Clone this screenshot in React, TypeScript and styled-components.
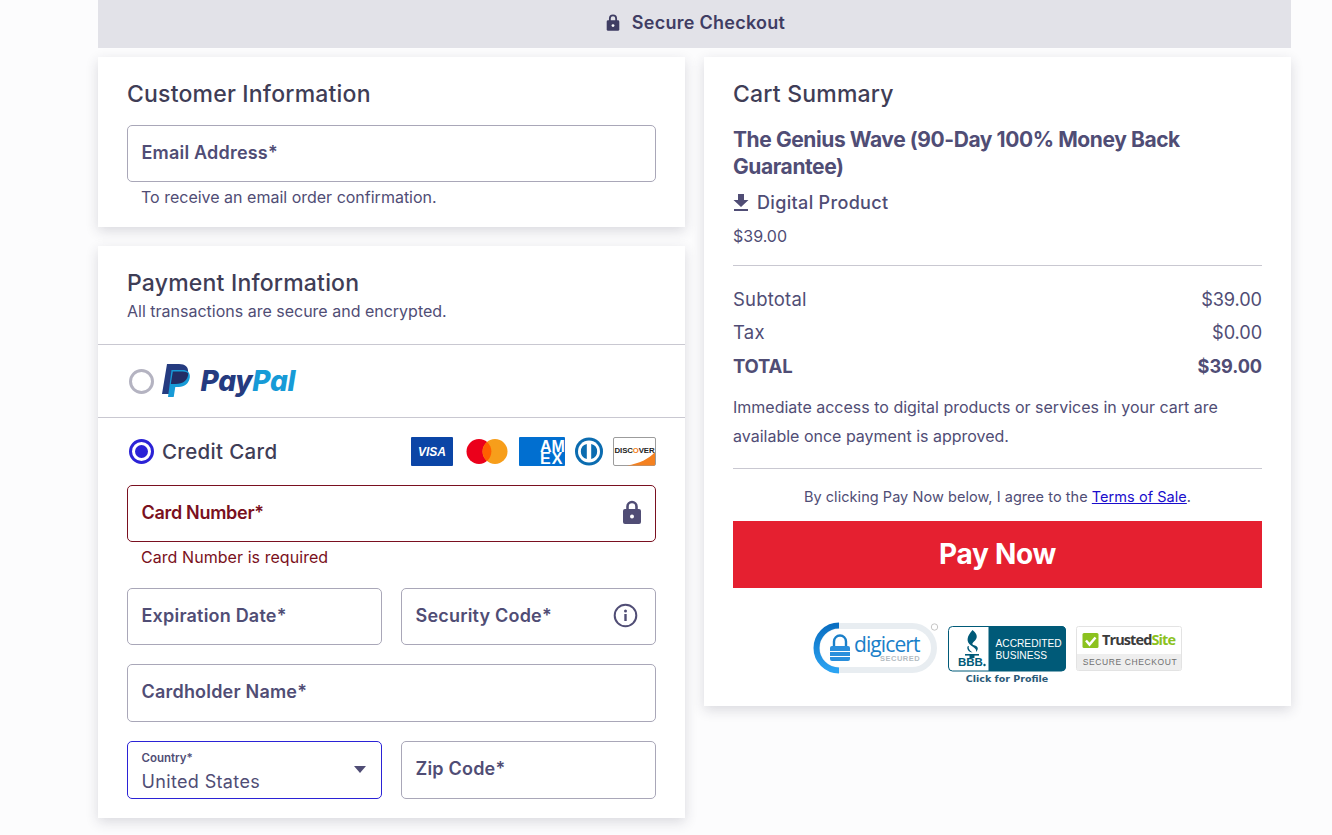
import React from "react";
import styled, { createGlobalStyle } from "styled-components";

const Global = createGlobalStyle`
  html, body { margin: 0; padding: 0; background: #fcfcfd; }
  body { font-family: "Inter", "Noto Sans", sans-serif; color: #3f3d56; overflow: hidden; height: 835px; }
  * { box-sizing: border-box; }
`;

const Page = styled.div`
  width: 1193px;
  margin-left: 98px;
`;
const TopBar = styled.div`
  height: 48px;
  background: #e2e2e8;
  display: flex;
  align-items: center;
  justify-content: center;
  gap: 12px;
  font-size: 18px;
  font-weight: 600;
  color: #3f3d63;
  letter-spacing: 0.26px;
  padding: 0 0 3px 2px;
`;
const Columns = styled.div`
  display: grid;
  grid-template-columns: 587px 587px;
  column-gap: 19px;
  align-items: start;
  margin-top: 9px;
`;
const Stack = styled.div`
  display: flex;
  flex-direction: column;
  gap: 19px;
`;
const Card = styled.section<{ $h: number }>`
  background: #fff;
  height: ${(p) => p.$h}px;
  box-shadow: 0 4px 12px rgba(40, 40, 60, 0.16);
`;
const Pad = styled.div`
  padding: 0 29px;
`;
const Heading = styled.h2`
  margin: 0;
  padding-top: 22px;
  font-size: 23px;
  line-height: 30px;
  font-weight: 500;
  color: #3f3d56;
  letter-spacing: 0.2px;
`;
const Field = styled.div<{ $error?: boolean; $focus?: boolean; $mt?: number; $h?: number }>`
  position: relative;
  flex: 1;
  height: ${(p) => p.$h ?? 57}px;
  margin-top: ${(p) => p.$mt ?? 0}px;
  display: flex;
  align-items: center;
  justify-content: space-between;
  padding: 0 14px 3px 13.5px;
  border: 1px solid ${(p) => (p.$error ? "#7a1020" : p.$focus ? "#2b22d6" : "#a9a7b8")};
  border-radius: 5px;
  background: #fff;
  font-size: 18px;
  font-weight: 600;
  letter-spacing: ${(p) => (p.$error ? "-0.3px" : "0.2px")};
  color: ${(p) => (p.$error ? "#7a1020" : "#504d75")};
`;
const Hint = styled.div<{ $error?: boolean }>`
  padding-left: 14px;
  margin-top: 5px;
  font-size: 16px;
  line-height: 20px;
  color: ${(p) => (p.$error ? "#7a1020" : "#504d75")};
  letter-spacing: ${(p) => (p.$error ? "0.06px" : "0")};
`;
const SubText = styled.div`
  font-size: 16px;
  line-height: 20px;
  margin-top: 3px;
  color: #504d75;
`;
const Spacer = styled.div`
  height: 23px;
`;
const Divider = styled.hr`
  margin: 0;
  border: 0;
  height: 1px;
  background: #c9c8d1;
`;
const PayPalRow = styled.div`
  height: 72px;
  display: flex;
  align-items: center;
  gap: 7px;
  padding-left: 31px;
`;
const Radio = styled.span<{ $on?: boolean }>`
  width: 25px;
  height: 25px;
  border-radius: 50%;
  flex: none;
  border: ${(p) => (p.$on ? "3px solid #2b22d6" : "3px solid #b4b3c1")};
  display: flex;
  align-items: center;
  justify-content: center;
  &::after {
    content: "";
    display: ${(p) => (p.$on ? "block" : "none")};
    width: 13px;
    height: 13px;
    border-radius: 50%;
    background: #2b22d6;
  }
`;
const CardRow = styled.div`
  height: 67px;
  display: flex;
  align-items: center;
  padding: 0 29px 0 31px;
  gap: 8px;
`;
const CardLabel = styled.span`
  font-size: 20.5px;
  font-weight: 500;
  letter-spacing: 0.33px;
  color: #3f3d56;
  flex: 1;
`;
const Brands = styled.div`
  display: flex;
  align-items: center;
`;
const Row = styled.div<{ $mt: number }>`
  display: flex;
  gap: 19px;
  margin-top: ${(p) => p.$mt}px;
`;
const CountryText = styled.div`
  display: flex;
  flex-direction: column;
  margin-top: 8px;
`;
const CountryLabel = styled.span`
  font-size: 11.5px;
  line-height: 14px;
  font-weight: 600;
  letter-spacing: 0;
`;
const CountryValue = styled.span`
  font-size: 18px;
  line-height: 24px;
  font-weight: 400;
  margin-top: 5px;
  letter-spacing: 0.35px;
`;
const Caret = styled.span`
  width: 0;
  height: 0;
  border-left: 6.5px solid transparent;
  border-right: 6.5px solid transparent;
  border-top: 7px solid #504d75;
  margin: 2px 1px 0 0;
`;
const ProductTitle = styled.h3`
  margin: 17px 0 0;
  font-size: 21px;
  line-height: 27px;
  font-weight: 700;
  letter-spacing: -0.42px;
  color: #504d75;
`;
const DigitalRow = styled.div`
  margin-top: 9px;
  display: flex;
  align-items: center;
  gap: 8px;
  height: 27px;
  font-size: 18px;
  font-weight: 500;
  letter-spacing: 0.33px;
  color: #504d75;
`;
const Price = styled.div`
  margin-top: 8px;
  font-size: 16px;
  line-height: 24px;
  color: #504d75;
  margin-bottom: 17px;
`;
const TotalRow = styled.div<{ $bold?: boolean }>`
  display: flex;
  justify-content: space-between;
  height: 33.5px;
  align-items: center;
  font-size: 18.5px;
  font-weight: ${(p) => (p.$bold ? 700 : 400)};
  letter-spacing: ${(p) => (p.$bold ? "-0.2px" : "0.2px")};
  color: #504d75;
`;
const Amount = styled.span`
  letter-spacing: -0.1px;
  font-size: 18.2px;
`;
const Totals = styled.div`
  padding-top: 16px;
`;
const Notice = styled.p`
  margin: 10px 0 17px;
  font-size: 16px;
  line-height: 29px;
  color: #504d75;
`;
const Terms = styled.p`
  margin: 18px 0 14px;
  font-size: 14.5px;
  line-height: 20px;
  text-align: center;
  letter-spacing: 0.05px;
  color: #504d75;
  a { color: #1a0dcc; text-decoration: underline; }
`;
const PayButton = styled.button`
  display: block;
  width: 100%;
  height: 67px;
  border: 0;
  background: #e52030;
  color: #fff;
  font-family: inherit;
  font-size: 28px;
  font-weight: 700;
  letter-spacing: -0.3px;
`;
const Badges = styled.div`
  display: flex;
  justify-content: center;
  align-items: flex-start;
  margin-top: 33px;
`;
const IconEnd = styled.span<{ $mr: number }>`
  display: flex;
  margin-right: ${(p) => p.$mr}px;
`;

const LockIcon = ({ size = 18, color = "#3f3d63" }: { size?: number; color?: string }) => (
  <svg width={size} height={size * 1.2} viewBox="0 0 20 24">
    <path d="M5.5 10V6.5a4.5 4.5 0 0 1 9 0V10" fill="none" stroke={color} strokeWidth="2.6" />
    <rect x="1" y="9" width="18" height="15" rx="2" fill={color} />
    <circle cx="10" cy="16.5" r="2" fill="#fff" />
  </svg>
);

const PayPalLogo = () => (
  <svg width="138" height="48" viewBox="0 -6 138 48">
    <path d="M6 1h12c6 0 10 3 9 9-1 7-6 11-13 11H10L8 31H1z" fill="#253b80" />
    <path d="M10.5 7h11c4.500 0 8 2.300 7.300 7.500-1 6-5.300 9.500-11 9.500h-3.500l-1.600 10H7z" fill="#179bd7" />
    <path d="M9.800 21l2-12.500h10c2.500 0 4.500.7 5.500 2-.4 6.500-5 10.500-13 10.500z" fill="#222d65" />
    <text x="39.500" y="28" fontFamily="Inter, sans-serif" fontWeight="800" fontStyle="italic" fontSize="28" letterSpacing="-0.3">
      <tspan fill="#253b80">Pay</tspan>
      <tspan fill="#179bd7">Pal</tspan>
    </text>
  </svg>
);

const BrandLogos = () => (
  <svg width="246" height="40" viewBox="0 -5 246 40">
    <rect x="1" y="0" width="42" height="29" rx="1" fill="#0b45a6" />
    <text x="22" y="19" textAnchor="middle" fontFamily="'Liberation Sans',sans-serif" fontWeight="700" fontStyle="italic" fontSize="12" fill="#fff">VISA</text>
    <circle cx="69" cy="14.500" r="12.500" fill="#eb001b" />
    <circle cx="85" cy="14.500" r="12.500" fill="#f79e1b" />
    <path d="M77 5a12.500 12.500 0 0 1 0 19 12.500 12.500 0 0 1 0-19z" fill="#ff5f00" />
    <rect x="109" y="0" width="46" height="29" rx="1" fill="#016fd0" />
    <text x="130" y="15" fontFamily="'Liberation Sans',sans-serif" fontWeight="700" fontSize="16" fill="#fff">AM</text>
    <text x="130" y="26.500" fontFamily="'Liberation Sans',sans-serif" fontWeight="700" fontSize="16" letterSpacing="1" fill="#fff">EX</text>
    <circle cx="179" cy="14.500" r="14" fill="#0b6cb0" />
    <circle cx="179" cy="14.500" r="11" fill="#fff" />
    <path d="M176.800 7v15a7.700 7.700 0 0 1 0-15zM181.200 7a7.700 7.700 0 0 1 0 15z" fill="#0b6cb0" />
    <rect x="203.500" y="0.500" width="42" height="28" rx="1.500" fill="#fff" stroke="#9c9c9c" />
    <path d="M245 15v12.500a1 1 0 0 1-1 1H217c12-2 22-6.500 28-13.500z" fill="#f48120" />
    <text x="224.500" y="15.500" textAnchor="middle" fontFamily="'Liberation Sans',sans-serif" fontWeight="700" fontSize="7.800" fill="#222" letterSpacing="-0.1">DISC<tspan fill="#f48120">O</tspan>VER</text>
  </svg>
);

const InfoIcon = () => (
  <svg width="25" height="25" viewBox="0 0 25 25">
    <circle cx="12.500" cy="12.500" r="10.800" fill="none" stroke="#504d75" strokeWidth="2" />
    <rect x="11.300" y="11" width="2.400" height="7" fill="#504d75" />
    <circle cx="12.500" cy="8" r="1.500" fill="#504d75" />
  </svg>
);

const DownloadIcon = () => (
  <svg width="16" height="17" viewBox="0 0 16 17">
    <path d="M5 0h6v6h4.500L8 13 .5 6H5z" fill="#504d75" />
    <rect x="1" y="15" width="14" height="2" fill="#504d75" />
  </svg>
);

const TrustBadges = () => (
  <svg width="372" height="66" viewBox="0 0 372 66">
    <defs>
      <linearGradient id="dcArc" x1="0" y1="0" x2="0" y2="1">
        <stop offset="0" stopColor="#0a6fc2" />
        <stop offset="1" stopColor="#2ba3f2" />
      </linearGradient>
    </defs>
    <path d="M27 5H100a22 22 0 0 1 0 44H27a22 22 0 0 1 0-44z" fill="#fff" stroke="#e8edf1" strokeWidth="6" />
    <path d="M27 4.500a22.500 22.500 0 0 0 0 45" fill="none" stroke="url(#dcArc)" strokeWidth="6" />
    <path d="M22 25v-4.500a6 6 0 0 1 12 0V25" fill="none" stroke="#1a7fc9" strokeWidth="2.400" />
    <rect x="18" y="25" width="20" height="15" rx="2" fill="#2a8fdc" />
    <rect x="18" y="30" width="20" height="1" fill="#fff" />
    <rect x="18" y="35" width="20" height="1" fill="#fff" />
    <text x="42" y="31" fontFamily="'Open Sans',sans-serif" fontSize="21" letterSpacing="-0.9" fill="#1a7fc9">digicert</text>
    <text x="68" y="40" fontFamily="'Liberation Sans',sans-serif" fontWeight="700" fontSize="7.500" letterSpacing="0.5" fill="#b4bcc2">SECURED</text>
    <circle cx="122.500" cy="6" r="3.200" fill="none" stroke="#c6c6c6" strokeWidth="1" />
    <rect x="136.500" y="5.500" width="117" height="44.500" rx="4" fill="#fff" stroke="#005a78" />
    <path d="M176.500 5h73a4.500 4.500 0 0 1 4.500 4.500v36a4.500 4.500 0 0 1-4.500 4.500h-73z" fill="#005a78" />
    <path d="M160.500 9c5 4 6 8 1 12-2 2-1 3 1.500 3.500 3 1 4 3.500 1 6.500 1-3-2-4.500-5-6.500-5-3.500-4.500-9 1.500-15.500z" fill="#005a78" />
    <path d="M157 25c-1 2 0 4 3.500 6.500-3 0-6-3-5-6z" fill="#005a78" />
    <rect x="153" y="33" width="14" height="1.600" fill="#005a78" />
    <rect x="157.500" y="34" width="5" height="3" fill="#005a78" />
    <text x="146" y="45" fontFamily="'Liberation Sans',sans-serif" fontWeight="700" fontSize="11.500" fill="#005a78">BBB</text>
    <circle cx="172.500" cy="44" r="1.200" fill="#005a78" />
    <text x="183.500" y="26" fontFamily="'Liberation Sans',sans-serif" fontSize="10.200" fill="#fff">ACCREDITED</text>
    <text x="183.500" y="38" fontFamily="'Liberation Sans',sans-serif" fontSize="10.200" fill="#fff">BUSINESS</text>
    <text x="195" y="61" textAnchor="middle" fontFamily="'DejaVu Sans',sans-serif" fontWeight="700" fontSize="9.500" fill="#2b5a78">Click for Profile</text>
    <rect x="264.500" y="5.500" width="105" height="44" rx="2" fill="#fff" stroke="#e3e3e3" />
    <rect x="265" y="33" width="104" height="16" fill="#eeeeee" />
    <rect x="270.500" y="12" width="16" height="15" rx="1.500" fill="#8cc21f" />
    <path d="M274 19.500l3.500 4 6-7" fill="none" stroke="#fff" strokeWidth="2.500" />
    <text x="290" y="24" fontFamily="'Open Sans',sans-serif" fontWeight="700" fontSize="14.500" letterSpacing="-0.9" fill="#3b3b3b">Trusted<tspan fill="#8cc21f">Site</tspan></text>
    <text x="318" y="44" textAnchor="middle" fontFamily="'Liberation Sans',sans-serif" fontSize="8.500" letterSpacing="0.6" fill="#6e6e6e">SECURE CHECKOUT</text>
  </svg>
);

export default function App() {
  return (
    <Page>
      <Global />
      <TopBar>
        <LockIcon size={14} />
        Secure Checkout
      </TopBar>
      <Columns>
        <Stack>
          <Card $h={170}>
            <Pad>
              <Heading>Customer Information</Heading>
              <Field $mt={16}>Email Address*</Field>
              <Hint>To receive an email order confirmation.</Hint>
            </Pad>
          </Card>
          <Card $h={572}>
            <Pad>
              <Heading>Payment Information</Heading>
              <SubText>All transactions are secure and encrypted.</SubText>
            </Pad>
            <Spacer />
            <Divider />
            <PayPalRow>
              <Radio />
              <PayPalLogo />
            </PayPalRow>
            <Divider />
            <CardRow>
              <Radio $on />
              <CardLabel>Credit Card</CardLabel>
              <Brands>
                <BrandLogos />
              </Brands>
            </CardRow>
            <Pad>
              <Field $error>
                Card Number*
                <IconEnd $mr={-1}>
                  <LockIcon size={20} color="#504d75" />
                </IconEnd>
              </Field>
              <Hint $error>Card Number is required</Hint>
              <Row $mt={21}>
                <Field>Expiration Date*</Field>
                <Field>
                  Security Code*
                  <IconEnd $mr={3}>
                    <InfoIcon />
                  </IconEnd>
                </Field>
              </Row>
              <Row $mt={19}>
                <Field $h={58}>Cardholder Name*</Field>
              </Row>
              <Row $mt={19}>
                <Field $focus $h={58}>
                  <CountryText>
                    <CountryLabel>Country*</CountryLabel>
                    <CountryValue>United States</CountryValue>
                  </CountryText>
                  <Caret />
                </Field>
                <Field $h={58}>Zip Code*</Field>
              </Row>
            </Pad>
          </Card>
        </Stack>
        <Card $h={649}>
          <Pad>
            <Heading>Cart Summary</Heading>
            <ProductTitle>The Genius Wave (90-Day 100% Money Back Guarantee)</ProductTitle>
            <DigitalRow>
              <DownloadIcon />
              Digital Product
            </DigitalRow>
            <Price>$39.00</Price>
            <Divider />
            <Totals>
              <TotalRow><span>Subtotal</span><Amount>$39.00</Amount></TotalRow>
              <TotalRow><span>Tax</span><Amount>$0.00</Amount></TotalRow>
              <TotalRow $bold><span>TOTAL</span><Amount>$39.00</Amount></TotalRow>
            </Totals>
            <Notice>Immediate access to digital products or services in your cart are available once payment is approved.</Notice>
            <Divider />
            <Terms>By clicking Pay Now below, I agree to the <a href="#">Terms of Sale</a>.</Terms>
            <PayButton>Pay Now</PayButton>
            <Badges>
              <TrustBadges />
            </Badges>
          </Pad>
        </Card>
      </Columns>
    </Page>
  );
}
